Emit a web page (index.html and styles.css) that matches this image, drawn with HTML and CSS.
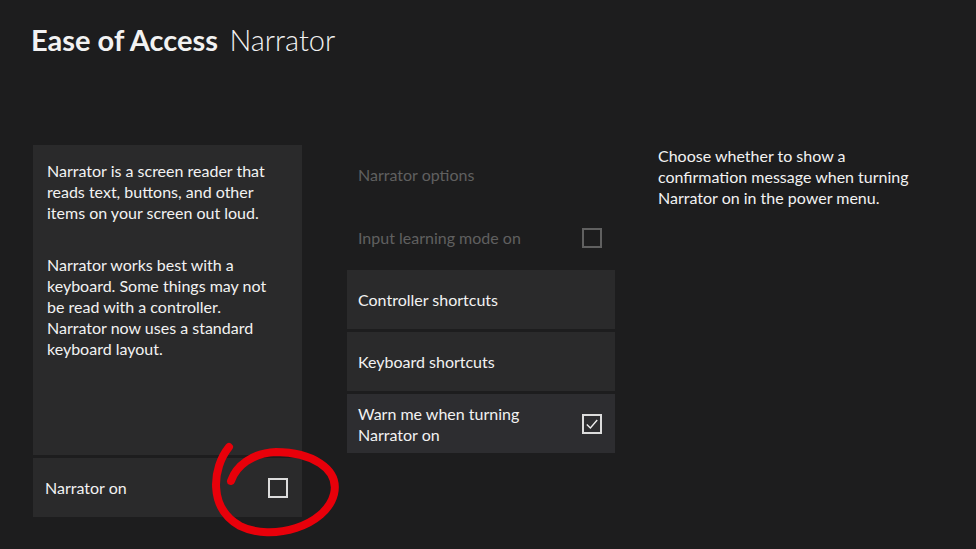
FILE: index.html
```html
<!DOCTYPE html>
<html lang="en">
	<head>
		<meta charset="UTF-8">
		<title>Ease of Access - Narrator</title>
		<link rel="stylesheet" href="styles.css">
	</head>
	<body>
		<header class="page-header">
			<span class="page-header-section">Ease of Access</span>
			<span class="page-header-page">Narrator</span>
		</header>
		<div class="main-content">
			<div class="left-column">
				<div class="description-tile">
					<p>Narrator is a screen reader that reads text, buttons, and other items on your screen out loud.</p>
					<p>Narrator works best with a keyboard. Some things may not be read with a controller. Narrator now uses a standard keyboard layout.</p>
				</div>
				<div class="setting-tile">
					<span>Narrator on</span>
					<span class="checkbox"></span>
				</div>
			</div>
			<div class="middle-column">
				<div class="options-title">Narrator options</div>
				<div class="setting-tile setting-tile-disabled">
					<span>Input learning mode on</span>
					<span class="checkbox"></span>
				</div>
				<div class="setting-tile">
					<span>Controller shortcuts</span>
				</div>
				<div class="setting-tile">
					<span>Keyboard shortcuts</span>
				</div>
				<div class="setting-tile setting-tile-focused">
					<span class="setting-label-wrap">Warn me when turning Narrator on</span>
					<span class="checkbox checkbox-checked">
						<svg viewBox="0 0 20 20" width="18" height="18">
							<path d="M3.5 10.5 L8 15 L16.5 5" fill="none" stroke="#eee" stroke-width="1.7"/>
						</svg>
					</span>
				</div>
			</div>
			<div class="right-column">
				Choose whether to show a confirmation message when turning Narrator on in the power menu.
			</div>
		</div>
		<svg class="red-circle" width="976" height="549" viewBox="0 0 976 549">
			<path d="M229 447 C212 468, 208 508, 240 526 C272 542, 326 526, 334 494 C340 468, 310 452, 276 452 C252 453, 236 466, 231 481" fill="none" stroke="#e8000a" stroke-width="8" stroke-linecap="round"/>
		</svg>
	</body>
</html>
```

FILE: styles.css
```css
*, *::before, *::after {
	box-sizing: border-box;
}

html, body {
	margin: 0;
	padding: 0;
	height: 100%;
}

body {
	background: #1d1d1e;
	color: #f2f2f2;
	font-family: Lato, "Noto Sans", sans-serif;
	font-size: 16px;
	overflow: hidden;
	position: relative;
}

.page-header {
	padding: 21px 0 0 31px;
	height: 145px;
	font-size: 29px;
	line-height: 38px;
}

.page-header-section {
	font-weight: 700;
	margin-right: 4px;
}

.page-header-page {
	font-weight: 300;
}

.main-content {
	display: flex;
	padding-left: 33px;
}

.left-column {
	display: flex;
	flex-direction: column;
	gap: 3px;
	width: 269px;
}

.description-tile {
	background: #2a2a2b;
	height: 310px;
	padding: 15px 20px 15px 14px;
	line-height: 21px;
}

.description-tile p {
	margin: 0 0 31px;
}

.setting-tile {
	display: flex;
	align-items: center;
	justify-content: space-between;
	background: #2a2a2b;
	height: 59px;
	padding: 0 14px 0 12px;
}

.middle-column {
	display: flex;
	flex-direction: column;
	gap: 3px;
	width: 268px;
	margin-left: 45px;
}

.middle-column .setting-tile {
	padding: 0 13px 0 11px;
}

.options-title {
	height: 60px;
	padding: 20px 0 0 11px;
	color: #606060;
}

.setting-tile-disabled {
	background: transparent;
	color: #606060;
}

.setting-tile-disabled .checkbox {
	border-color: #606060;
}

.setting-tile-focused {
	background: #2d2d30;
}

.setting-label-wrap {
	width: 180px;
	line-height: 21px;
}

.checkbox {
	display: flex;
	align-items: center;
	justify-content: center;
	width: 20px;
	height: 20px;
	border: 2px solid #dcdcdc;
}

.right-column {
	width: 262px;
	margin-left: 43px;
	line-height: 21px;
}

.red-circle {
	position: absolute;
	left: 0;
	top: 0;
	pointer-events: none;
}
```
